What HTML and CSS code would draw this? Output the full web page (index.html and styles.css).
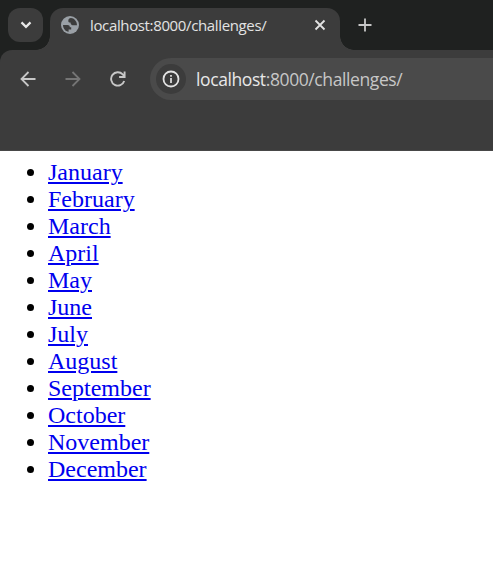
FILE: index.html
```html
<!DOCTYPE html>
<html lang="en">
<head>
<meta charset="utf-8">
<title>localhost:8000/challenges/</title>
<link rel="stylesheet" href="styles.css">
</head>
<body>
<header class="browser">
  <div class="tabstrip">
    <button class="tab-search" aria-label="Search tabs">
      <svg width="12" height="8" viewBox="0 0 12 8"><path d="M1.500 1.400 6 5.900l4.500-4.500" fill="none" stroke="#e8e8e8" stroke-width="2.200"/></svg>
    </button>
    <div class="tab">
      <svg class="globe" width="18" height="18" viewBox="0 0 18 18">
        <circle cx="9" cy="9" r="9" fill="#9aa0a6"/>
        <path d="M10 2.100C8 2.300 7.300 3.500 7.300 5c0 1 .9 1.600 1.900 1.600h.3c0 1.500.8 2.600 2.200 2.600H16c0-3.900-2.900-7-6-7.100ZM2 9h4.500c1.500 0 2.300.9 2.300 2.200h1.400v2.300H7.600v2.300C4.500 15.400 2 12.500 2 9Z" fill="#3c3c3c"/>
      </svg>
      <span class="tab-title">localhost:8000/challenges/</span>
      <svg class="close" width="12" height="12" viewBox="0 0 12 12"><path d="m1.500 1.500 9 9m0-9-9 9" stroke="#e3e3e3" stroke-width="1.800"/></svg>
    </div>
    <svg class="new-tab" width="14" height="14" viewBox="0 0 14 14"><path d="M7 .5v13M.5 7h13" stroke="#c7c7c7" stroke-width="1.800"/></svg>
  </div>
  <div class="toolbar">
    <svg class="nav" width="16" height="16" viewBox="0 0 16 16"><path d="M15.500 8H2M8.500 1 1.500 8l7 7" fill="none" stroke="#c7c7c7" stroke-width="1.800"/></svg>
    <svg class="nav" width="16" height="16" viewBox="0 0 16 16"><path d="M.5 8H14M7.500 1l7 7-7 7" fill="none" stroke="#757575" stroke-width="1.800"/></svg>
    <svg class="nav" width="16" height="16" viewBox="0 0 16 16"><path d="M14.200 10A6.700 6.700 0 1 1 12.700 3.300L14.500 5.300M14.600.500V6H9.100" fill="none" stroke="#c7c7c7" stroke-width="1.900"/></svg>
    <div class="address">
      <span class="site-info">
        <svg width="18" height="18" viewBox="0 0 18 18"><circle cx="9" cy="9" r="7.500" fill="none" stroke="#e3e3e3" stroke-width="1.800"/><path d="M9 8v5M9 5v1.700" stroke="#e3e3e3" stroke-width="1.700"/></svg>
      </span>
      <span class="url"><span class="host">localhost</span>:8000/challenges/</span>
    </div>
  </div>
</header>
<main class="page">
  <ul class="months">
    <li><a href="#january">January</a></li>
    <li><a href="#february">February</a></li>
    <li><a href="#march">March</a></li>
    <li><a href="#april">April</a></li>
    <li><a href="#may">May</a></li>
    <li><a href="#june">June</a></li>
    <li><a href="#july">July</a></li>
    <li><a href="#august">August</a></li>
    <li><a href="#september">September</a></li>
    <li><a href="#october">October</a></li>
    <li><a href="#november">November</a></li>
    <li><a href="#december">December</a></li>
  </ul>
</main>
</body>
</html>
```
FILE: styles.css
```css
* { box-sizing: border-box; }
body {
  margin: 0;
  background: #fff;
  overflow: hidden;
}
svg { display: block; flex: none; }
.browser {
  height: 151px;
  background: #1f2120;
  font-family: "Open Sans", "Noto Sans", sans-serif;
}
.tabstrip {
  height: 50px;
  padding: 8px 0 0 8px;
  display: flex;
}
.tab-search {
  width: 35px;
  height: 34px;
  margin-right: 7px;
  padding: 0;
  border: 0;
  border-radius: 12px;
  background: #3c3c3c;
  display: flex;
  align-items: center;
  justify-content: center;
}
.tab {
  position: relative;
  width: 290px;
  height: 42px;
  padding: 0 14px 8px 11px;
  border-radius: 13px 13px 0 0;
  background: #3c3c3c;
  display: flex;
  align-items: center;
}
.tab::before,
.tab::after {
  content: "";
  position: absolute;
  bottom: 0;
  width: 14px;
  height: 14px;
}
.tab::before {
  left: -14px;
  background: radial-gradient(circle at 0 0, transparent 13.500px, #3c3c3c 14px);
}
.tab::after {
  right: -14px;
  background: radial-gradient(circle at 100% 0, transparent 13.500px, #3c3c3c 14px);
}
.tab-title {
  margin-left: 11px;
  color: #e3e3e3;
  font-size: 15px;
  letter-spacing: -0.360px;
  white-space: nowrap;
}
.close { margin-left: auto; }
.new-tab { margin: 10px 0 0 18px; }
.toolbar {
  height: 101px;
  padding: 8px 0 0 20px;
  border-top-left-radius: 12px;
  background: #3c3c3c;
  border-bottom: 1px solid #474747;
  display: flex;
}
.nav { margin: 13px 29px 0 0; }
.address {
  flex: 1;
  height: 42px;
  margin-left: -5px;
  padding-left: 6px;
  border-radius: 21px 0 0 21px;
  background: #4a4a4a;
  display: flex;
  align-items: center;
}
.site-info {
  width: 30px;
  height: 30px;
  border-radius: 50%;
  background: #3c3c3c;
  display: flex;
  align-items: center;
  justify-content: center;
}
.url {
  margin-left: 10px;
  color: #c7c7c7;
  font-size: 17.500px;
  letter-spacing: -0.400px;
  white-space: nowrap;
}
.host { color: #e8e8e8; }
.page { padding: 8px; }
.months {
  margin: 0;
  padding-left: 40px;
  font: 24px/27px "Liberation Serif", serif;
}
.months a {
  color: #0000ee;
  text-decoration: underline;
  text-decoration-thickness: 2px;
  text-underline-offset: 2px;
}
```
